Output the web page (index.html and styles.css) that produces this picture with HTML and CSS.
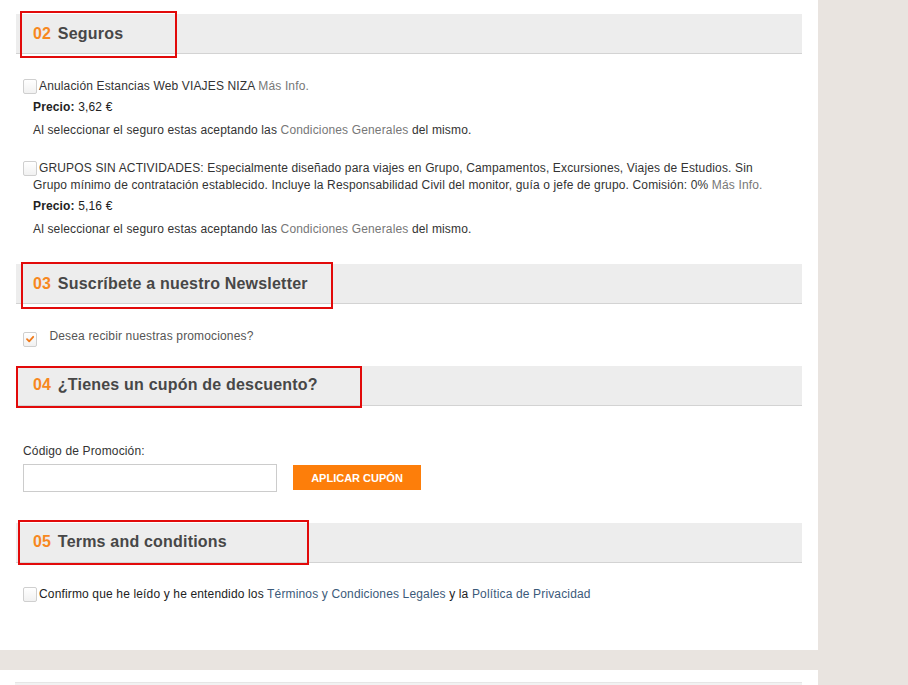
FILE: index.html
```html
<!DOCTYPE html>
<html lang="es">

<head>
    <meta charset="UTF-8" />
    <meta name="viewport" content="width=device-width, initial-scale=1.0" />
    <title>Reserva - Seguros y condiciones</title>
    <link rel="stylesheet" href="styles.css">
</head>

<body>
    <main class="panel">
        <section class="step">
            <h2 class="step-title"><span class="num">02</span> Seguros</h2>
            <span class="mark mark-02"></span>
        </section>

        <div class="option first">
            <p class="option-title"><span class="check"></span>Anulación Estancias Web VIAJES NIZA <a href="#" class="more">Más Info.</a></p>
            <p class="price"><b>Precio:</b> 3,62 €</p>
            <p class="note">Al seleccionar el seguro estas aceptando las <a href="#" class="more">Condiciones Generales</a> del mismo.</p>
        </div>

        <div class="option">
            <p class="option-title"><span class="check"></span>GRUPOS SIN ACTIVIDADES: Especialmente diseñado para viajes en Grupo, Campamentos, Excursiones, Viajes de Estudios. Sin Grupo mínimo de contratación establecido. Incluye la Responsabilidad Civil del monitor, guía o jefe de grupo. Comisión: 0% <a href="#" class="more">Más Info.</a></p>
            <p class="price"><b>Precio:</b> 5,16 €</p>
            <p class="note">Al seleccionar el seguro estas aceptando las <a href="#" class="more">Condiciones Generales</a> del mismo.</p>
        </div>

        <section class="step step-03">
            <h2 class="step-title"><span class="num">03</span> Suscríbete a nuestro Newsletter</h2>
            <span class="mark mark-03"></span>
        </section>

        <label class="newsletter">
            <span class="check checked">
                <svg viewBox="0 0 10 10" width="10" height="10"><path d="M2 5.2 L4.2 7.3 L8.2 2.8" fill="none" stroke="#f07a1a" stroke-width="1.8" stroke-linecap="round" stroke-linejoin="round"/></svg>
            </span>
            Desea recibir nuestras promociones?
        </label>

        <section class="step step-04">
            <h2 class="step-title"><span class="num">04</span> ¿Tienes un cupón de descuento?</h2>
            <span class="mark mark-04"></span>
        </section>

        <div class="coupon">
            <p class="coupon-label">Código de Promoción:</p>
            <div class="coupon-row">
                <input type="text" class="coupon-input">
                <button class="btn-coupon">APLICAR CUPÓN</button>
            </div>
        </div>

        <section class="step step-05">
            <h2 class="step-title"><span class="num">05</span> Terms and conditions</h2>
            <span class="mark mark-05"></span>
        </section>

        <p class="terms"><span class="check"></span>Confirmo que he leído y he entendido los <a href="#" class="link">Términos y Condiciones Legales</a> y la <a href="#" class="link">Política de Privacidad</a></p>
    </main>

    <div class="panel panel-next">
        <div class="next-box"></div>
    </div>
</body>

</html>
```

FILE: styles.css
```css
* {
    margin: 0;
    padding: 0;
    box-sizing: border-box;
}

body {
    background-color: #e9e4e0;
    font-family: "Liberation Sans", Arial, sans-serif;
    font-size: 12px;
    letter-spacing: 0.15px;
    color: #333;
}

a {
    text-decoration: none;
}

.panel {
    width: 818px;
    background-color: #fff;
    padding: 14px 16px 47px;
}

.panel-next {
    margin-top: 20px;
    padding: 12px 16px 0 15px;
}

.next-box {
    height: 20px;
    background-color: #f2f2f2;
    border-top: 1px solid #e6e6e6;
}

/* Section header bars */
.step {
    position: relative;
    height: 40px;
    background-color: #ededed;
    border-bottom: 1px solid #d3d3d3;
    display: flex;
    align-items: center;
    padding-left: 17px;
}

.step-title {
    font-size: 16px;
    font-weight: bold;
    color: #474747;
    line-height: 20px;
    letter-spacing: 0.2px;
}

.num {
    color: #f7881f;
    margin-right: 2px;
}

.step-03 {
    margin-top: 26px;
}

.step-04 {
    margin-top: 19px;
}

.step-05 {
    margin-top: 31px;
}

/* red annotation frames */
.mark {
    position: absolute;
    border: 2px solid #e20a0a;
}

.mark-02 {
    left: 4px;
    top: -3px;
    width: 157px;
    height: 47px;
}

.mark-03 {
    left: 5px;
    top: -2px;
    width: 312px;
    height: 47px;
}

.mark-04 {
    left: 0;
    top: 0;
    width: 346px;
    height: 42px;
}

.mark-05 {
    left: 2px;
    top: -3px;
    width: 291px;
    height: 45px;
}

/* checkbox look */
.check {
    display: inline-flex;
    align-items: center;
    justify-content: center;
    width: 14px;
    height: 15px;
    border: 1px solid #cfcfcf;
    border-radius: 2px;
    background: linear-gradient(#fff, #f1f1f1);
    vertical-align: -4px;
    margin-left: -10px;
    margin-right: 2px;
}

/* insurance options */
.option {
    margin-top: 21px;
    padding: 0 27px 0 17px;
    line-height: 17px;
}

.option.first {
    margin-top: 24px;
}

.option-title {
    color: #333;
}

.more {
    color: #777;
}

.price {
    margin-top: 4px;
    color: #222;
}

.note {
    margin-top: 6px;
    color: #333;
}

/* newsletter */
.newsletter {
    display: block;
    margin-top: 24px;
    padding-left: 17px;
    line-height: 17px;
    color: #555;
}

.newsletter .check {
    margin-right: 9px;
}

/* coupon */
.coupon {
    margin-top: 37px;
    padding-left: 7px;
}

.coupon-label {
    line-height: 17px;
    color: #333;
}

.coupon-row {
    display: flex;
    align-items: center;
    gap: 16px;
    margin-top: 4px;
}

.coupon-input {
    width: 254px;
    height: 28px;
    border: 1px solid #cccccc;
    background: #fff;
}

.btn-coupon {
    width: 128px;
    height: 25px;
    border: none;
    background-color: #fd7e0a;
    color: #fff;
    font-family: "Liberation Sans", Arial, sans-serif;
    font-weight: bold;
    font-size: 11px;
    cursor: pointer;
}

/* terms */
.terms {
    margin-top: 23px;
    padding-left: 17px;
    line-height: 17px;
    color: #222;
}

.link {
    color: #3b5a7a;
}
```
